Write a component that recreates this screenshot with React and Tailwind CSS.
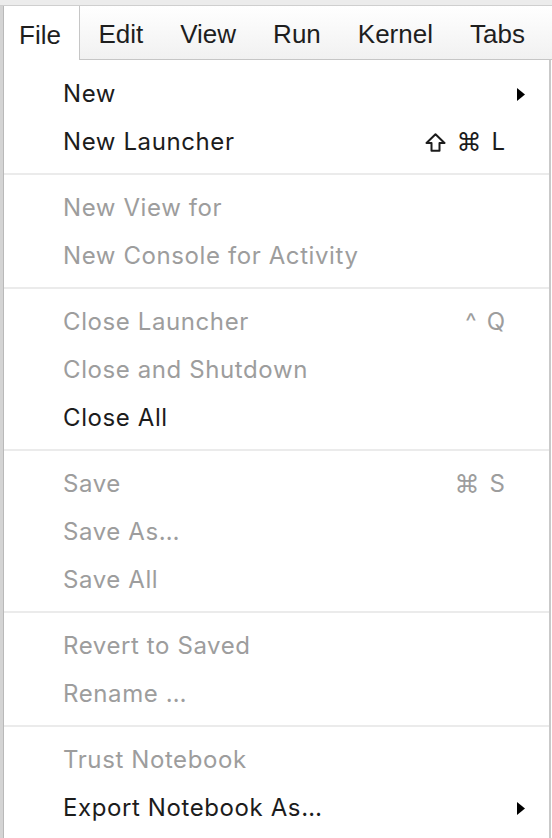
import React from 'react';

const topMenus = ['File', 'Edit', 'View', 'Run', 'Kernel', 'Tabs'];

// Groups of items in the File menu
const groups = [
    [
        { label: 'New', submenu: true },
        { label: 'New Launcher', keys: ['shift', '⌘', 'L'] },
    ],
    [
        { label: 'New View for', disabled: true },
        { label: 'New Console for Activity', disabled: true },
    ],
    [
        { label: 'Close Launcher', keys: ['^', 'Q'], disabled: true },
        { label: 'Close and Shutdown', disabled: true },
        { label: 'Close All' },
    ],
    [
        { label: 'Save', keys: ['⌘', 'S'], disabled: true },
        { label: 'Save As…', disabled: true },
        { label: 'Save All', disabled: true },
    ],
    [
        { label: 'Revert to Saved', disabled: true },
        { label: 'Rename …', disabled: true },
    ],
    [
        { label: 'Trust Notebook', disabled: true },
        { label: 'Export Notebook As…', submenu: true },
    ],
];

function ShiftIcon() {
    return (
        <svg width="21" height="19" viewBox="0 0 21 19">
            <path d="M10.5 1.2 L19.5 10 H14.5 V17.8 H6.5 V10 H1.5 Z" fill="none" stroke="currentColor" strokeWidth="2" strokeLinejoin="round" />
        </svg>
    );
}

function Key({ k }) {
    if (k === 'shift') return <ShiftIcon />;
    if (k === '⌘') {
        return <span className="font-['DejaVu_Sans',sans-serif] text-[25px] leading-none">⌘</span>;
    }
    return <span className="leading-none">{k}</span>;
}

function MenuItem({ item }) {
    const color = item.disabled ? 'text-[#9d9d9d]' : 'text-[#1c1c1c]';
    return (
        <div className={`flex items-center h-12 pl-[59px] pr-[24px] ${color}`}>
            <span className="flex-1">{item.label}</span>
            {item.keys && (
                <span className="mr-[20px] flex items-center gap-[10px] tracking-normal">
                    {item.keys.map(k => <Key key={k} k={k} />)}
                </span>
            )}
            {item.submenu && (
                <svg width="8" height="13" viewBox="0 0 8 13">
                    <path d="M0 0 L8 6.5 L0 13 Z" fill="#000" />
                </svg>
            )}
        </div>
    );
}

export default function App() {
    return (
        <div className="w-[552px] h-[838px] bg-white overflow-hidden flex flex-col font-['Inter','Liberation_Sans',sans-serif]">
            {/* window strip */}
            <div className="h-[6px] bg-[#ececec] border-b border-[#cfcfcf] shrink-0" />

            <div className="flex flex-1">
                {/* left edge of the app behind */}
                <div className="w-[4px] bg-[#d4d4d4] border-r border-[#b9b9b9] shrink-0" />

                <div className="flex-1 flex flex-col">
                    {/* menubar */}
                    <div className="flex h-[54px] shrink-0 text-[26px] text-[#1e1e1e] font-['Liberation_Sans',sans-serif]">
                        {topMenus.map((m, i) => (
                            <div
                                key={m}
                                className={
                                    i === 0
                                        ? 'flex items-center pt-[4px] pl-[15px] pr-[18px] bg-white border-r border-[#c6c6c6]'
                                        : 'flex items-center pt-[4px] px-[18.5px] bg-gradient-to-b from-white to-[#f1f1f1] border-b border-[#c6c6c6]'
                                }
                            >
                                {m}
                            </div>
                        ))}
                        <div className="flex-1 bg-gradient-to-b from-white to-[#f1f1f1] border-b border-[#c6c6c6]" />
                    </div>

                    {/* dropdown */}
                    <div className="flex-1 bg-white border-r-2 border-[#c9c9c9] mr-[1px] pt-[10px] text-[24px] tracking-[0.6px]">
                        {groups.map((g, gi) => (
                            <div key={gi}>
                                {gi > 0 && <div className="h-[2px] bg-[#ebebeb] mt-[7px] mb-[9px]" />}
                                {g.map(item => (
                                    <MenuItem key={item.label} item={item} />
                                ))}
                            </div>
                        ))}
                    </div>
                </div>
            </div>
        </div>
    );
}
